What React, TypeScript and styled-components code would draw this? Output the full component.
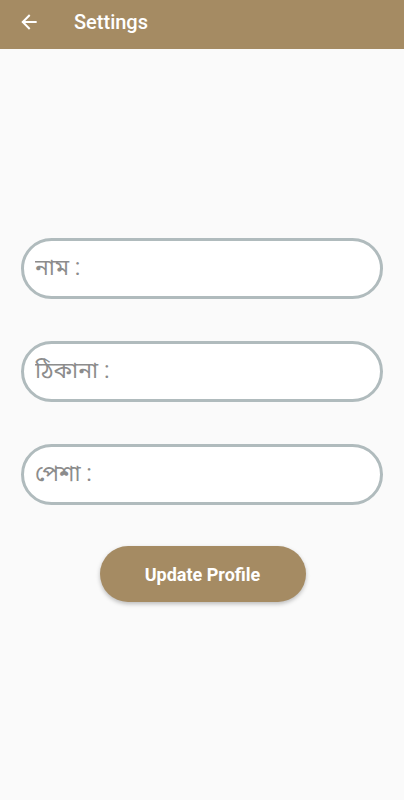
import React from 'react'
import styled, { createGlobalStyle } from 'styled-components'

const GlobalStyle = createGlobalStyle`
  html, body {
    margin: 0;
    padding: 0;
    background: #fafafa;
    font-family: Roboto, "Noto Sans Bengali", "Noto Sans", sans-serif;
  }
`

const Page = styled.div`
  min-height: 800px;
  background: #fafafa;
  display: flex;
  flex-direction: column;
`

const AppBar = styled.header`
  height: 49px;
  background: #a58b63;
  display: flex;
  align-items: center;
  padding: 0 0 0 18px;
  box-sizing: border-box;
`

const BackButton = styled.button`
  width: 22px;
  height: 22px;
  padding: 0;
  border: none;
  background: transparent;
  display: flex;
  align-items: center;
  justify-content: center;
  margin: 0 34px 5px 0;
`

const Title = styled.h1`
  margin: 0 0 5px;
  color: #fff;
  font-size: 20px;
  font-weight: 500;
  font-family: Roboto, sans-serif;
`

const Form = styled.form`
  display: flex;
  flex-direction: column;
  padding: 189px 21px 0 21px;
  gap: 42px;
`

const Field = styled.input`
  height: 61px;
  border: 3px solid #b0bbbd;
  border-radius: 31px;
  background: #fff;
  box-sizing: border-box;
  padding: 0 0 3px 11px;
  font-size: 23px;
  color: #333;
  font-family: Roboto, "Noto Sans Bengali", "Noto Sans", sans-serif;
  outline: none;

  &::placeholder {
    color: #8c8c8c;
  }
`

const ButtonRow = styled.div`
  display: flex;
  justify-content: center;
`

const UpdateButton = styled.button`
  width: 206px;
  height: 56px;
  border: none;
  border-radius: 28px;
  background: #a58b63;
  color: #fff;
  font-family: Roboto, sans-serif;
  font-weight: 700;
  font-size: 18px;
  box-shadow: 0 2px 4px rgba(0, 0, 0, 0.25);
  margin: -1px 0 0 1px;
`

const BackArrow = () => (
  <svg width="20" height="20" viewBox="0 0 24 24" fill="none" stroke="#fff" strokeWidth="2.4" strokeLinecap="square">
    <path d="M20 12H5" />
    <path d="M12 4.5L4.5 12L12 19.5" />
  </svg>
)

const App = () => {
  return (
    <Page>
      <GlobalStyle />
      <AppBar>
        <BackButton aria-label="back">
          <BackArrow />
        </BackButton>
        <Title>Settings</Title>
      </AppBar>
      <Form onSubmit={(e) => e.preventDefault()}>
        <Field placeholder="নাম :" />
        <Field placeholder="ঠিকানা :" />
        <Field placeholder="পেশা :" />
        <ButtonRow>
          <UpdateButton type="submit">Update Profile</UpdateButton>
        </ButtonRow>
      </Form>
    </Page>
  )
}

export default App
